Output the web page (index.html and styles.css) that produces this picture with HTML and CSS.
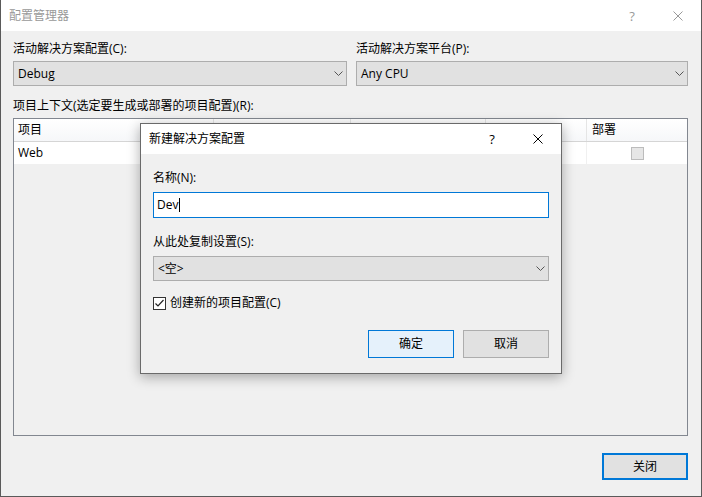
FILE: index.html
```html
<!DOCTYPE html>
<html lang="zh-CN">
<head>
<meta charset="utf-8">
<title>配置管理器</title>
<link rel="stylesheet" href="styles.css">
</head>
<body>
<div class="window">
  <div class="titlebar">
    <span class="title inactive">配置管理器</span>
    <div class="caption">
      <span class="cap-btn help">?</span>
      <span class="cap-btn">
        <svg width="10" height="10" viewBox="0 0 10 10"><path d="M0.5 0.5 L9.5 9.5 M9.5 0.5 L0.5 9.5" stroke="#999" stroke-width="1" fill="none"/></svg>
      </span>
    </div>
  </div>
  <div class="body">
    <div class="top-grid">
      <div class="field">
        <div class="label">活动解决方案配置(C):</div>
        <div class="combo"><span>Debug</span>
          <svg class="chev" width="9" height="5" viewBox="0 0 9 5"><polyline points="0.5,0.5 4.5,4.5 8.5,0.5" stroke="#555" stroke-width="1" fill="none"/></svg>
        </div>
      </div>
      <div class="field">
        <div class="label">活动解决方案平台(P):</div>
        <div class="combo"><span>Any CPU</span>
          <svg class="chev" width="9" height="5" viewBox="0 0 9 5"><polyline points="0.5,0.5 4.5,4.5 8.5,0.5" stroke="#555" stroke-width="1" fill="none"/></svg>
        </div>
      </div>
    </div>
    <div class="label ctx-label">项目上下文(选定要生成或部署的项目配置)(R):</div>
    <div class="table">
      <div class="trow thead">
        <div class="cell c1">项目</div>
        <div class="cell c2"></div>
        <div class="cell c3"></div>
        <div class="cell c4"></div>
        <div class="cell c5">部署</div>
      </div>
      <div class="trow tbody">
        <div class="cell c1">Web</div>
        <div class="cell c2"></div>
        <div class="cell c3"></div>
        <div class="cell c4"></div>
        <div class="cell c5 center"><span class="chk-disabled"></span></div>
      </div>
    </div>
    <div class="footer">
      <div class="btn btn-default-thick">关闭</div>
    </div>
  </div>

  <div class="dialog">
    <div class="dlg-title">
      <span class="title">新建解决方案配置</span>
      <div class="caption">
        <span class="cap-btn help dark">?</span>
        <span class="cap-btn">
          <svg width="10" height="10" viewBox="0 0 10 10"><path d="M0.5 0.5 L9.5 9.5 M9.5 0.5 L0.5 9.5" stroke="#000" stroke-width="1" fill="none"/></svg>
        </span>
      </div>
    </div>
    <div class="dlg-body">
      <div class="label">名称(N):</div>
      <div class="input"><span>Dev</span><span class="caret"></span></div>
      <div class="label label-gap">从此处复制设置(S):</div>
      <div class="combo dlg-combo"><span>&lt;空&gt;</span>
        <svg class="chev" width="9" height="5" viewBox="0 0 9 5"><polyline points="0.5,0.5 4.5,4.5 8.5,0.5" stroke="#555" stroke-width="1" fill="none"/></svg>
      </div>
      <div class="check-row">
        <span class="checkbox">
          <svg width="11" height="11" viewBox="0 0 11 11"><polyline points="1.5,5.5 4,8 9.5,2" stroke="#222" stroke-width="1.2" fill="none"/></svg>
        </span>
        <span>创建新的项目配置(C)</span>
      </div>
      <div class="dlg-buttons">
        <div class="btn btn-default">确定</div>
        <div class="btn">取消</div>
      </div>
    </div>
  </div>
</div>
</body>
</html>
```
FILE: styles.css
```css
* { box-sizing: border-box; }
html, body { margin: 0; padding: 0; }
body {
  width: 702px;
  height: 497px;
  background: #f0f0f0;
  font-family: "Open Sans", "Noto Sans CJK SC", sans-serif;
  font-size: 12px;
  line-height: 16px;
  color: #000;
  overflow: hidden;
}
.window {
  position: relative;
  width: 702px;
  height: 497px;
  background: #f0f0f0;
  border-left: 1px solid #5a5a5a;
  border-right: 1px solid #5a5a5a;
  border-bottom: 1px solid #5a5a5a;
}
.titlebar {
  height: 31px;
  background: #fff;
  display: flex;
  align-items: center;
  justify-content: space-between;
}
.title { padding-left: 8px; }
.title.inactive { color: #999; }
.caption { display: flex; height: 100%; }
.cap-btn {
  width: 46px;
  height: 100%;
  display: flex;
  align-items: center;
  justify-content: center;
}
.help { color: #999; font-size: 13px; }
.help.dark { color: #000; }

.body {
  padding: 10px 13px 0 12px;
}
.top-grid {
  display: grid;
  grid-template-columns: 334px 332px;
  column-gap: 9px;
}
.label { height: 16px; white-space: nowrap; }
.combo {
  margin-top: 4px;
  height: 25px;
  background: #e1e1e1;
  border: 1px solid #adadad;
  display: flex;
  align-items: center;
  justify-content: space-between;
  padding: 0 3px 0 4px;
}
.chev { display: block; }
.ctx-label { margin-top: 12px; }

.table {
  margin-top: 4px;
  height: 318px;
  border: 1px solid #828790;
  background: #f0f0f0;
}
.trow { display: flex; }
.thead {
  height: 23px;
  background: linear-gradient(#ffffff, #f6f7f9);
  border-bottom: 1px solid #d5d5d5;
}
.tbody {
  height: 22px;
  background: #fff;
}
.cell {
  padding-left: 4px;
  display: flex;
  align-items: center;
  border-right: 1px solid #e5e5e5;
  white-space: nowrap;
}
.tbody .cell { border-right-color: #f0f0f0; }
.c1 { width: 200px; }
.c2 { width: 137px; }
.c3 { width: 135px; }
.c4 { width: 101px; }
.c5 { flex: 1; border-right: none; padding-left: 5px; }
.center { justify-content: center; padding-left: 0; }
.chk-disabled {
  width: 13px;
  height: 13px;
  background: #e6e6e6;
  border: 1px solid #bcbcbc;
}

.footer {
  display: flex;
  justify-content: flex-end;
  margin-top: 17px;
}
.btn {
  width: 86px;
  height: 28px;
  background: #e1e1e1;
  border: 1px solid #adadad;
  display: flex;
  align-items: center;
  justify-content: center;
}
.btn-default-thick {
  width: 86px;
  height: 27px;
  border: 2px solid #0078d7;
}
.btn-default {
  background: #e5f1fb;
  border-color: #0078d7;
}

.dialog {
  position: absolute;
  left: 139px;
  top: 123px;
  width: 422px;
  height: 251px;
  background: #f0f0f0;
  border: 1px solid #6a6a6a;
  box-shadow: 0 3px 12px rgba(0, 0, 0, 0.32);
}
.dlg-title {
  height: 30px;
  background: #fff;
  display: flex;
  align-items: center;
  justify-content: space-between;
}
.dlg-body {
  padding: 16px 12px 0 12px;
}
.input {
  margin-top: 6px;
  height: 26px;
  background: #fff;
  border: 1px solid #0078d7;
  display: flex;
  align-items: center;
  padding-left: 3px;
}
.caret {
  display: inline-block;
  width: 1px;
  height: 14px;
  background: #000;
  margin-left: 1px;
}
.label-gap { margin-top: 16px; }
.dlg-combo { margin-top: 6px; }
.check-row {
  margin-top: 14px;
  height: 16px;
  display: flex;
  align-items: center;
  gap: 4px;
}
.checkbox {
  width: 13px;
  height: 13px;
  background: #fff;
  border: 1px solid #333;
  display: flex;
  align-items: center;
  justify-content: center;
}
.checkbox svg { display: block; }
.dlg-buttons {
  margin-top: 19px;
  display: flex;
  justify-content: flex-end;
  gap: 9px;
}
```
